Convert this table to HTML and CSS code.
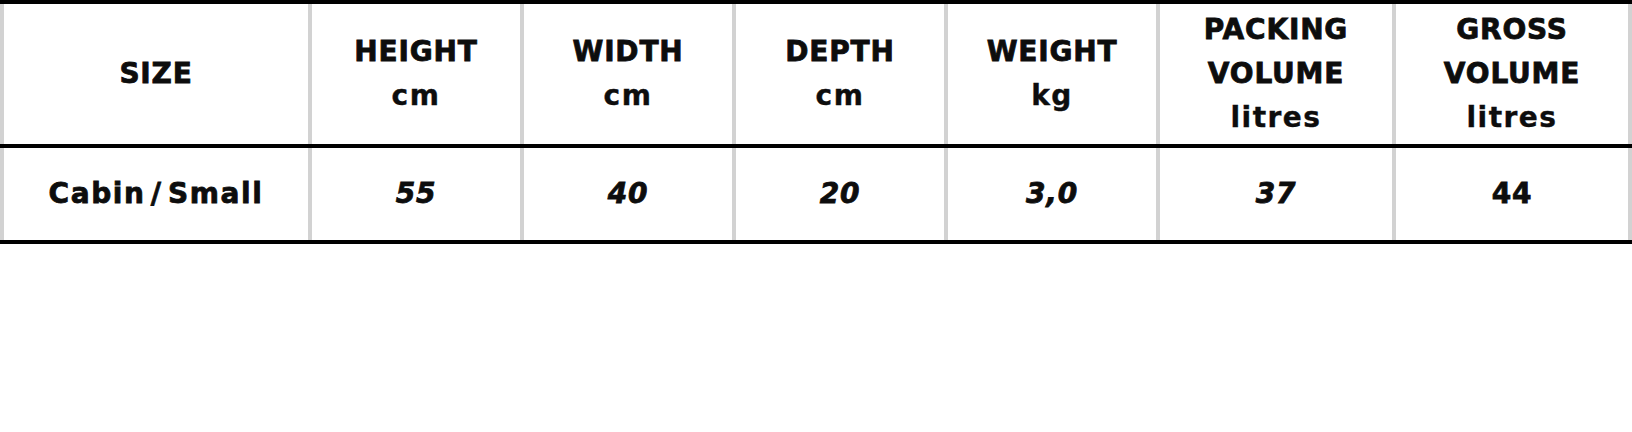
FILE: index.html
```html
<!DOCTYPE html>
<html lang="en">
<head>
<meta charset="utf-8">
<title>Size chart</title>
<link rel="stylesheet" href="styles.css">
</head>
<body>
<table class="size-table">
  <colgroup>
    <col class="c-size">
    <col class="c-std">
    <col class="c-std">
    <col class="c-std">
    <col class="c-std">
    <col class="c-wide">
    <col class="c-last">
  </colgroup>
  <thead>
    <tr>
      <th>SIZE</th>
      <th>HEIGHT<br><span class="unit">cm</span></th>
      <th>WIDTH<br><span class="unit">cm</span></th>
      <th>DEPTH<br><span class="unit">cm</span></th>
      <th>WEIGHT<br><span class="unit">kg</span></th>
      <th>PACKING<br>VOLUME<br><span class="unit">litres</span></th>
      <th class="last">GROSS<br>VOLUME<br><span class="unit">litres</span></th>
    </tr>
  </thead>
  <tbody>
    <tr>
      <td class="name">Cabin / Small</td>
      <td class="num">55</td>
      <td class="num">40</td>
      <td class="num">20</td>
      <td class="num">3,0</td>
      <td class="num">37</td>
      <td class="num upright last">44</td>
    </tr>
  </tbody>
</table>
</body>
</html>
```
FILE: styles.css
```css
html, body {
  margin: 0;
  padding: 0;
  background: #ffffff;
}

body {
  font-family: "DejaVu Sans", "Liberation Sans", sans-serif;
  color: #0d0d0d;
}

.size-table {
  width: 1632px;
  table-layout: fixed;
  border-collapse: separate;
  border-spacing: 0;
}

.c-size { width: 308px; }
.c-std { width: 212px; }
.c-wide { width: 236px; }
.c-last { width: 240px; }

.size-table th,
.size-table td {
  box-sizing: border-box;
  padding: 0 0 0 4px;
  text-align: center;
  vertical-align: middle;
  box-shadow: inset 4px 0 0 #d2d2d2;
  font-size: 28px;
  font-weight: 700;
  line-height: 44px;
  -webkit-text-stroke: 0.8px #0d0d0d;
}

.size-table th {
  height: 148px;
  letter-spacing: 0.8px;
  border-top: 4px solid #000000;
  border-bottom: 4px solid #000000;
}

.size-table td {
  height: 96px;
  border-bottom: 4px solid #000000;
}

.size-table .last {
  padding-right: 4px;
  box-shadow: inset 4px 0 0 #d2d2d2, inset -4px 0 0 #d2d2d2;
}

.unit {
  font-weight: 700;
  letter-spacing: 1.5px;
  -webkit-text-stroke: 0.4px #0d0d0d;
}

.name {
  letter-spacing: 1.6px;
  word-spacing: -6px;
}

.num {
  font-style: italic;
  letter-spacing: 0.8px;
}

.num.upright {
  font-style: normal;
}
```
